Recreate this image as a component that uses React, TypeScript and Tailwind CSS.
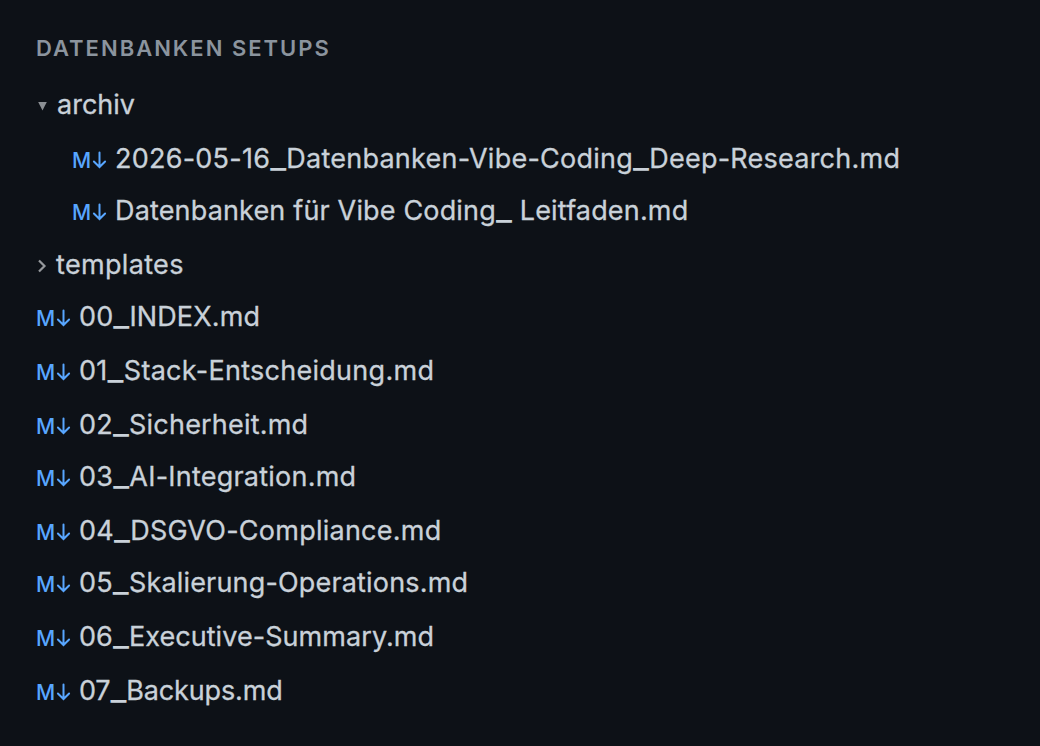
type Row = {
  name: string;
  kind: "open" | "closed" | "file";
  style?: string;
};

const rows: Row[] = [
  { name: "archiv", kind: "open", style: "mb-0.5" },
  { name: "2026-05-16_Datenbanken-Vibe-Coding_Deep-Research.md", kind: "file", style: "pl-9 tracking-[0.24px]" },
  { name: "Datenbanken für Vibe Coding_ Leitfaden.md", kind: "file", style: "pl-9 mb-0.5 tracking-[0.16px]" },
  { name: "templates", kind: "closed", style: "tracking-[0.33px]" },
  { name: "00_INDEX.md", kind: "file", style: "mb-0.5 tracking-[0.12px]" },
  { name: "01_Stack-Entscheidung.md", kind: "file", style: "mb-0.5 tracking-[0.28px]" },
  { name: "02_Sicherheit.md", kind: "file", style: "tracking-[0.2px]" },
  { name: "03_AI-Integration.md", kind: "file", style: "mb-0.5 tracking-[0.22px]" },
  { name: "04_DSGVO-Compliance.md", kind: "file", style: "tracking-[0.25px]" },
  { name: "05_Skalierung-Operations.md", kind: "file", style: "mb-0.5 tracking-[0.17px]" },
  { name: "06_Executive-Summary.md", kind: "file", style: "mb-0.5 tracking-[0.06px]" },
  { name: "07_Backups.md", kind: "file", style: "tracking-[-0.15px]" },
];

function MarkdownIcon() {
  return (
    <span className="flex w-[43px] shrink-0 items-center pt-1 text-[21px] leading-none font-medium tracking-normal text-[#58a6ff]">
      <span className="w-5">M</span>
      <svg className="h-[18px] w-[15px]" viewBox="0 0 15 18" fill="none" stroke="currentColor" strokeWidth="2" strokeLinecap="round">
        <path d="M7.5 1.5V16M1.9 10.5L7.5 16l5.6-5.5" />
      </svg>
    </span>
  );
}

// underscores are drawn a bit wider than the font's own
function FileName({ name }: { name: string }) {
  return (
    <span className="text-[27px] leading-none whitespace-pre [-webkit-text-stroke:0.3px]">
      {name.split(/(_)/).map((part, i) =>
        part === "_" ? (
          <span key={i} className="text-[35px] leading-[0] [-webkit-text-stroke:0px]">_</span>
        ) : (
          part
        ),
      )}
    </span>
  );
}

export default function App() {
  return (
    <div className="h-[746px] w-[1040px] overflow-hidden bg-[#0d1117] px-9 pt-[34px] font-['Inter',sans-serif] text-[#c9d1d9]">
      <h2 className="h-11 text-[22px] leading-7 font-semibold tracking-[2px] text-[#8b949e]">
        DATENBANKEN SETUPS
      </h2>
      <ul>
        {rows.map((row) => (
          <li key={row.name} className={`flex h-[52px] items-center ${row.style ?? ""}`}>
            {row.kind === "file" && <MarkdownIcon />}
            {row.kind === "open" && (
              <svg className="mt-1 mr-[9px] h-3 w-3 shrink-0" viewBox="0 0 12 12">
                <path d="M2.2 2h8.6l-4.3 8.5z" fill="#8b8f94" />
              </svg>
            )}
            {row.kind === "closed" && (
              <svg className="mt-1 mr-2 h-4 w-3 shrink-0" viewBox="0 0 12 16" fill="none" stroke="#96999d" strokeWidth="2.2">
                <path d="M3 2.5l5.5 5.5L3 13.5" />
              </svg>
            )}
            <FileName name={row.name} />
          </li>
        ))}
      </ul>
    </div>
  );
}
